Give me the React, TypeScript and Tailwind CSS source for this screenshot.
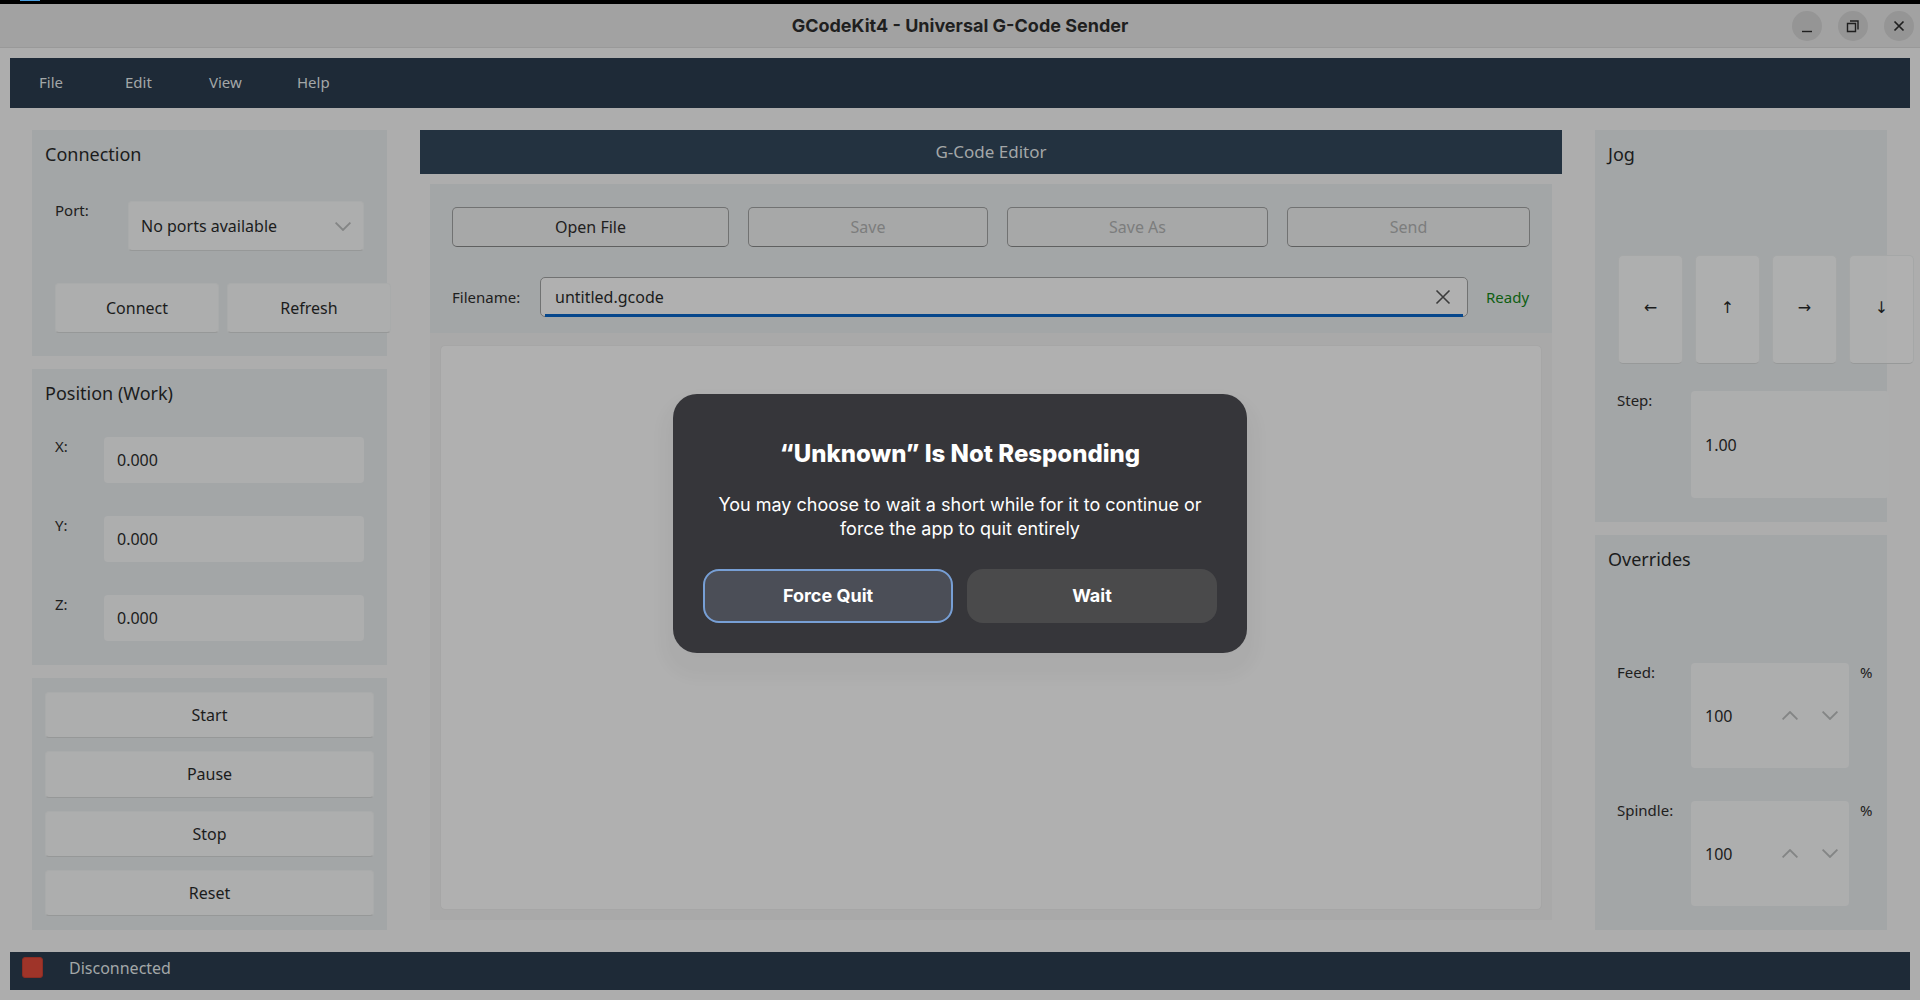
import React from "react";

const raised =
  "rounded-[4px] border border-[#a9abab] border-b-[#969898] bg-[#adaeae] text-base text-[#1b1c1c]";
const field = "rounded-[4px] bg-[#adaeae] text-base text-[#1b1c1c]";
const labelText = "text-[15px] leading-[18px] text-[#1e2020]";
const panel = "bg-[#a3a6a7] pt-3";

function Chevron({ up = false }: { up?: boolean }) {
  return (
    <svg width="16" height="9" viewBox="0 0 16 9" fill="none" stroke="#838585" strokeWidth="1.8" aria-hidden="true">
      <path d={up ? "M.6 8.4 8 1l7.400 7.400" : "M.6 .6 8 8l7.400-7.400"} />
    </svg>
  );
}

function Heading({ children }: { children: React.ReactNode }) {
  return <h2 className="px-[13px] text-lg leading-6 text-[#1b1c1c]">{children}</h2>;
}

function AxisRow({ axis }: { axis: string }) {
  const id = `axis-${axis}`;
  return (
    <div className="flex items-start">
      <label htmlFor={id} className={`w-[49px] shrink-0 ${labelText}`}>
        {axis}:
      </label>
      <input id={id} defaultValue="0.000" className={`h-[46px] min-w-0 flex-1 px-[13px] ${field}`} />
    </div>
  );
}

function OverrideRow({ name }: { name: string }) {
  const id = `override-${name}`;
  return (
    <div className="flex items-start">
      <label htmlFor={id} className={`w-[74px] shrink-0 ${labelText}`}>
        {name}:
      </label>
      <div className={`flex h-[105px] w-[158px] items-center pr-[11px] ${field}`}>
        <input id={id} defaultValue="100" className="h-full min-w-0 flex-1 bg-transparent pl-[14px]" />
        <button aria-label={`Increase ${name}`} className="mr-6">
          <Chevron up />
        </button>
        <button aria-label={`Decrease ${name}`}>
          <Chevron />
        </button>
      </div>
      <span className={`ml-[11px] ${labelText}`}>%</span>
    </div>
  );
}

function WindowButton({ label, children }: { label: string; children: React.ReactNode }) {
  return (
    <button aria-label={label} className="flex size-[30px] items-center justify-center rounded-full bg-[#959595]">
      <svg width="16" height="16" viewBox="0 0 16 16" fill="none" stroke="#1f1f1f" strokeWidth="1.4" aria-hidden="true">
        {children}
      </svg>
    </button>
  );
}

export default function App() {
  return (
    <div className="relative flex min-h-screen flex-col overflow-hidden border-b border-black bg-[#adadad] font-['Noto_Sans',sans-serif]">
      <div className="h-1 bg-black px-5">
        <div className="h-px w-5 bg-[#4a9fe0]" />
      </div>
      <header className="grid h-11 grid-cols-[1fr_auto_1fr] items-center border-b border-[#999999] bg-[#a2a2a2] px-[6px]">
        <h1 className="col-start-2 font-['Inter',sans-serif] text-lg font-bold text-[#1f1f1f]">
          GCodeKit4 - Universal G-Code Sender
        </h1>
        <div className="flex justify-end gap-4">
          <WindowButton label="Minimize">
            <path d="M3 13.500h10" />
          </WindowButton>
          <WindowButton label="Restore">
            <path d="M2.500 5.500h8v8h-8z" />
            <path d="M5 3h8v8.500" />
          </WindowButton>
          <WindowButton label="Close">
            <path d="M3.500 3.500l9 9M12.500 3.500l-9 9" strokeWidth="1.700" />
          </WindowButton>
        </div>
      </header>

      <nav className="mx-[10px] mt-[10px] flex h-[50px] items-center bg-[#1e2a37] pb-0.5 pl-[29px] text-[15px] text-[#a3a7a8]">
        <button className="w-[86px] text-left">File</button>
        <button className="w-[84px] text-left">Edit</button>
        <button className="w-[88px] text-left">View</button>
        <button>Help</button>
      </nav>

      <main className="flex flex-1 py-[22px] pr-[33px] pl-8">
        <aside className="flex w-[355px] shrink-0 flex-col gap-[13px]">
          <section className={`pb-[23px] ${panel}`}>
            <Heading>Connection</Heading>
            <div className="mt-[35px] flex items-start px-[23px]">
              <label htmlFor="port" className={`w-[73px] shrink-0 ${labelText}`}>
                Port:
              </label>
              <div className="relative flex-1">
                <select id="port" className={`block h-[50px] w-full appearance-none pl-3 ${raised}`}>
                  <option>No ports available</option>
                </select>
                <span className="pointer-events-none absolute inset-y-0 right-[13px] flex items-center">
                  <Chevron />
                </span>
              </div>
            </div>
            <div className="mt-8 -mr-1 flex gap-2 pl-[23px]">
              <button className={`h-[50px] flex-1 ${raised}`}>Connect</button>
              <button className={`h-[50px] flex-1 ${raised}`}>Refresh</button>
            </div>
          </section>

          <section className={`pb-6 ${panel}`}>
            <Heading>Position (Work)</Heading>
            <div className="mt-8 flex flex-col gap-[33px] px-[23px]">
              <AxisRow axis="X" />
              <AxisRow axis="Y" />
              <AxisRow axis="Z" />
            </div>
          </section>

          <section className="flex flex-1 flex-col gap-[13px] bg-[#a3a6a7] px-[13px] py-[14px]">
            {["Start", "Pause", "Stop", "Reset"].map((name) => (
              <button key={name} className={`flex-1 ${raised}`}>
                {name}
              </button>
            ))}
          </section>
        </aside>

        <section className="mx-[33px] flex min-w-0 flex-1 flex-col">
          <h2 className="bg-[#233240] py-[10px] text-center text-[17px] leading-6 text-[#a3a7a8]">G-Code Editor</h2>
          <div className="m-[10px] flex flex-1 flex-col bg-[#a9a9a9]">
            <div className="bg-[#a3a6a7] px-[22px] pt-[23px] pb-4">
              <div className="grid grid-cols-[277fr_240fr_261fr_243fr] gap-[19px]">
                {["Open File", "Save", "Save As", "Send"].map((name, i) => (
                  <button
                    key={name}
                    disabled={i > 0}
                    className="h-10 rounded-[5px] border border-[#717272] border-b-[#5f6060] bg-[#a7a8a8] text-base text-[#1f2020] disabled:text-[#7c7d7d]"
                  >
                    {name}
                  </button>
                ))}
              </div>
              <div className="mt-[30px] flex items-center">
                <label htmlFor="filename" className={`w-[88px] shrink-0 ${labelText}`}>
                  Filename:
                </label>
                <div className="relative flex h-10 flex-1 items-center rounded-[5px] border border-[#717272] bg-[#b0b0b0] pr-4">
                  <input
                    id="filename"
                    defaultValue="untitled.gcode"
                    className="h-full min-w-0 flex-1 bg-transparent pl-[14px] text-base text-[#1b1c1c] outline-none"
                  />
                  <button aria-label="Clear filename">
                    <svg width="16" height="16" viewBox="0 0 16 16" stroke="#3c3c3c" strokeWidth="1.6" aria-hidden="true">
                      <path d="M1.500 1.500l13 13M14.500 1.500l-13 13" />
                    </svg>
                  </button>
                  <span className="absolute inset-x-1 -bottom-px h-[3px] bg-[#06478c]" />
                </div>
                <output className="ml-[18px] w-[44px] shrink-0 text-[15px] leading-5 text-[#0f5e12]">Ready</output>
              </div>
            </div>
            <textarea
              aria-label="G-Code program"
              className="mx-[10px] mt-3 mb-[10px] flex-1 resize-none rounded-[5px] border border-[#a6a6a6] bg-[#b0b0b0] p-3 text-base outline-none"
            />
          </div>
        </section>

        <aside className="flex w-[292px] shrink-0 flex-col gap-[13px]">
          <section className={`pb-6 ${panel}`}>
            <Heading>Jog</Heading>
            <div className="mt-[89px] flex gap-3 pl-[23px]">
              {["←", "↑", "→", "↓"].map((arrow) => (
                <button
                  key={arrow}
                  className="h-[109px] w-[65px] shrink-0 rounded-[5px] border border-[#a5a7a7] border-b-[#979999] bg-[#b1b1b1]/75 pb-1 font-['DejaVu_Sans',sans-serif] text-base text-[#1b1c1c]"
                >
                  {arrow}
                </button>
              ))}
            </div>
            <div className="mt-[27px] -mr-[2px] flex items-start pl-[22px]">
              <label htmlFor="step" className={`w-[74px] shrink-0 ${labelText}`}>
                Step:
              </label>
              <input id="step" defaultValue="1.00" className={`h-[107px] min-w-0 flex-1 pl-[14px] ${field}`} />
            </div>
          </section>

          <section className={`flex-1 pb-6 ${panel}`}>
            <Heading>Overrides</Heading>
            <div className="mt-[92px] flex flex-col gap-[33px] pl-[22px]">
              <OverrideRow name="Feed" />
              <OverrideRow name="Spindle" />
            </div>
          </section>
        </aside>
      </main>

      <footer className="mx-[10px] mb-[10px] flex h-[38px] items-start bg-[#1e2a37] px-3 pt-[5px] text-base text-[#a3a7a8]">
        <span className="size-[21px] rounded-[3px] border border-[#8b2d24] bg-[#9f3429]" />
        <span className="ml-[26px] leading-[22px]">Disconnected</span>
      </footer>

      <div className="absolute inset-0 flex items-center justify-center pt-[47px]">
        <div
          role="alertdialog"
          aria-labelledby="dialog-title"
          aria-describedby="dialog-text"
          className="w-[574px] rounded-3xl bg-[#36363a] px-[30px] pt-[42px] pb-[30px] text-center font-['Inter',sans-serif] text-white shadow-[0_14px_16px_10px_rgba(0,0,0,0.03)]"
        >
          <h2 id="dialog-title" className="text-2xl leading-9 font-extrabold">
            “Unknown” Is Not Responding
          </h2>
          <p id="dialog-text" className="mt-[21px] px-2 text-lg leading-6">
            You may choose to wait a short while for it to continue or force the app to quit entirely
          </p>
          <div className="mt-7 grid grid-cols-2 gap-[14px] text-lg font-bold">
            <button className="h-[54px] rounded-2xl border-2 border-[#779fd5] bg-[#4b4e57]">Force Quit</button>
            <button className="h-[54px] rounded-2xl bg-[#4a4a4b]">Wait</button>
          </div>
        </div>
      </div>
    </div>
  );
}
